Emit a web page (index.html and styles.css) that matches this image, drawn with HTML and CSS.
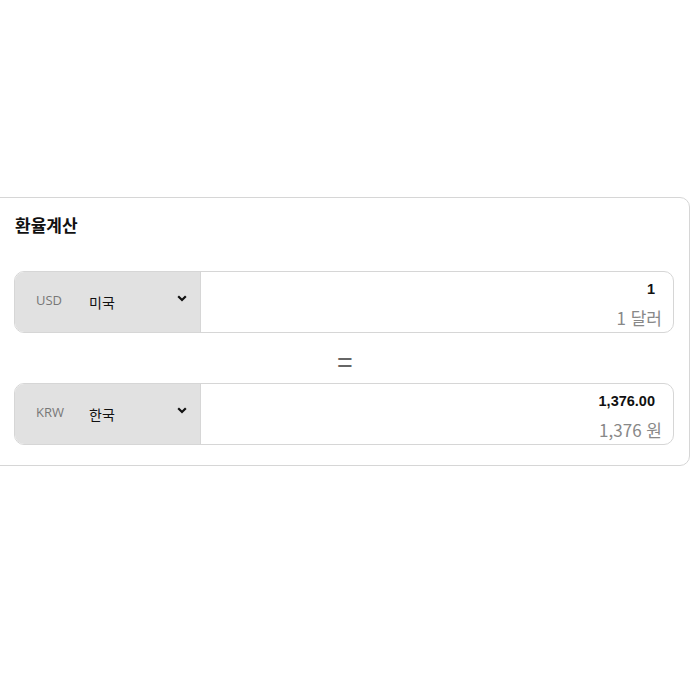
FILE: index.html
```html
<!DOCTYPE html>
<html lang="ko">
<head>
<meta charset="utf-8">
<link rel="stylesheet" href="styles.css">
</head>
<body>
<div class="card">
  <h2 class="title">환율계산</h2>
  <div class="row">
    <div class="sel">
      <span class="code">USD</span>
      <span class="country">미국</span>
      <svg class="chev" width="10" height="7" viewBox="0 0 10 7"><path d="M1.2 1.2 L5 5 L8.8 1.2" fill="none" stroke="#111" stroke-width="2.2"/></svg>
    </div>
    <div class="val">
      <div class="num">1</div>
      <div class="sub">1 달러</div>
    </div>
  </div>
  <div class="eq">=</div>
  <div class="row">
    <div class="sel">
      <span class="code">KRW</span>
      <span class="country">한국</span>
      <svg class="chev" width="10" height="7" viewBox="0 0 10 7"><path d="M1.2 1.2 L5 5 L8.8 1.2" fill="none" stroke="#111" stroke-width="2.2"/></svg>
    </div>
    <div class="val">
      <div class="num">1,376.00</div>
      <div class="sub">1,376 원</div>
    </div>
  </div>
</div>
</body>
</html>
```
FILE: styles.css
```css
html, body { margin: 0; padding: 0; background: #fff; }
body {
  font-family: "Noto Sans CJK KR", "Open Sans", sans-serif;
  padding-top: 197px;
}
.card {
  margin-left: -10px;
  width: 700px;
  box-sizing: border-box;
  border: 1px solid #d6d6d6;
  border-radius: 10px;
  padding: 10px 15px 20px 23px;
}
.title {
  margin: 0 0 29px 1px;
  font-size: 17px;
  font-weight: 700;
  line-height: 34px;
  color: #111;
}
.row {
  display: flex;
  height: 62px;
  box-sizing: border-box;
  border: 1px solid #d6d6d6;
  border-radius: 10px;
  overflow: hidden;
}
.sel {
  width: 186px;
  background: #e1e1e1;
  border-right: 1px solid #d6d6d6;
  display: flex;
  align-items: center;
  padding-left: 21px;
  box-sizing: border-box;
  padding-bottom: 2px;
}
.code {
  font-family: "Open Sans", sans-serif;
  font-size: 13px;
  color: #777;
  width: 53px;
  margin-bottom: 2px;
}
.country {
  font-size: 14px;
  color: #111;
  flex: 1;
  margin-top: 2px;
}
.chev { margin-right: 13px; margin-bottom: 6px; }
.val {
  flex: 1;
  display: flex;
  flex-direction: column;
  align-items: flex-end;
  padding: 8px 11px 0 0;
}
.num {
  font-family: "Liberation Sans", Arial, sans-serif;
  font-size: 14.5px;
  font-weight: 700;
  color: #111;
  line-height: 18px;
  padding-right: 7px;
}
.sub {
  font-family: "Noto Sans CJK KR", "Open Sans", sans-serif;
  font-size: 17px;
  color: #888;
  line-height: 22px;
  margin-top: 9px;
}
.eq {
  text-align: center;
  font-size: 27px;
  height: 50px;
  line-height: 60px;
  color: #666;
  font-family: "Liberation Sans", sans-serif;
  padding-left: 2px;
}
```
